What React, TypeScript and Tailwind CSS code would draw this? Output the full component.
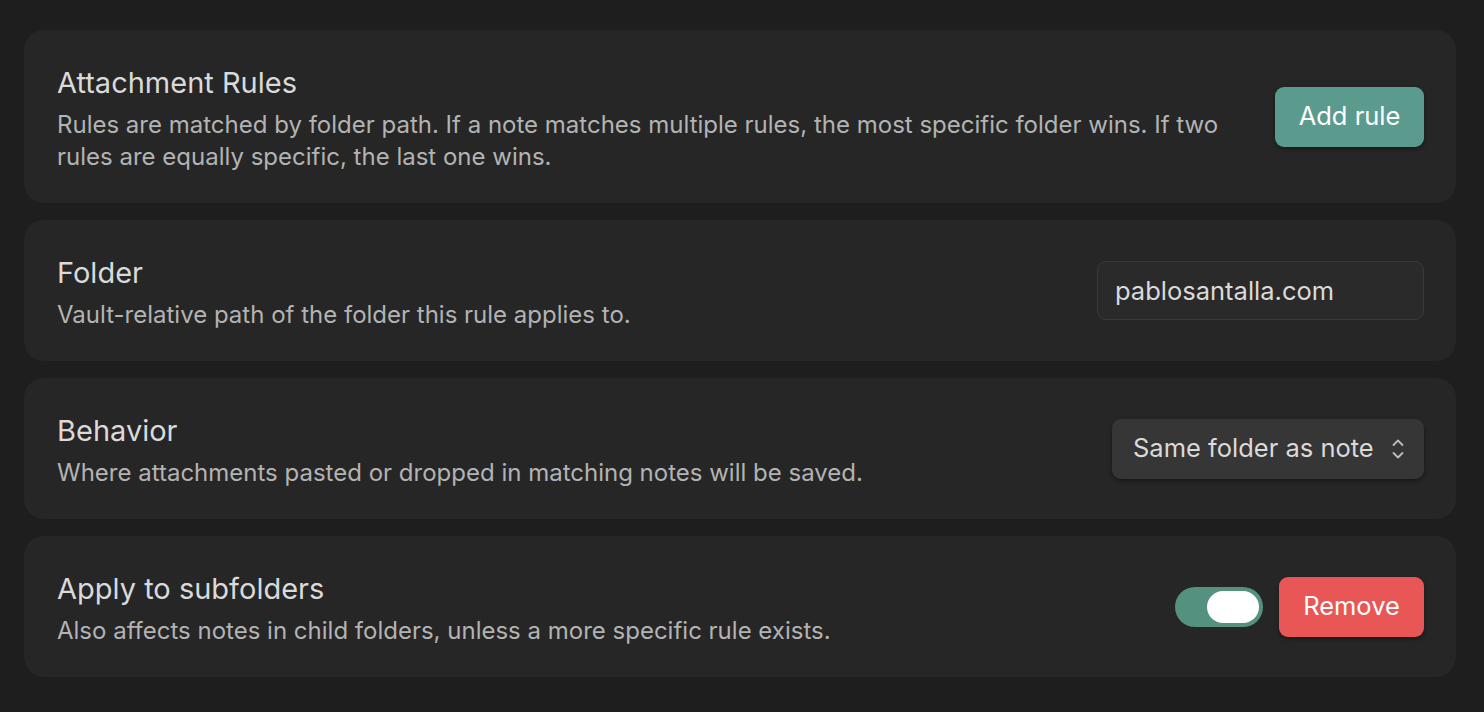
import React, { useState } from "react";

const font = { fontFamily: "Inter, 'Noto Sans', sans-serif" };

const Item = ({
  title,
  desc,
  children,
}: {
  title: string;
  desc: string;
  children: React.ReactNode;
}) => (
  <div className="flex items-center rounded-[20px] bg-[#262626] pl-[33px] pr-[32px] pt-[33px] pb-[30px]">
    <div className="mr-[28px] flex flex-1 flex-col gap-[8px] pt-[2px]">
      <div className="text-[29px] leading-[36px] text-[#dadada]">{title}</div>
      <div className="text-[24px] leading-[32px] text-[#b3b3b3]">{desc}</div>
    </div>
    <div className="mb-[3px] flex shrink-0 items-center gap-[16px]">{children}</div>
  </div>
);

const App = () => {
  const [folder, setFolder] = useState("pablosantalla.com");
  const [on, setOn] = useState(true);

  return (
    <div
      className="flex min-h-[712px] flex-col gap-[17px] bg-[#1e1e1e] pl-[24px] pr-[28px] pt-[30px] pb-[34px] antialiased"
      style={font}
    >
      <Item
        title="Attachment Rules"
        desc="Rules are matched by folder path. If a note matches multiple rules, the most specific folder wins. If two rules are equally specific, the last one wins."
      >
        <button className="h-[60px] w-[149px] rounded-[9px] bg-[#5a9b8e] text-[25.5px] text-white shadow-[0_2px_4px_rgba(0,0,0,0.35)]">
          Add rule
        </button>
      </Item>

      <Item title="Folder" desc="Vault-relative path of the folder this rule applies to.">
        <input
          value={folder}
          onChange={(e) => setFolder(e.currentTarget.value)}
          className="h-[59px] w-[327px] rounded-[9px] border-[1.5px] border-[#3a3a3a] bg-[#2a2a2a] px-[17px] text-[25.5px] text-[#dadada] outline-none"
        />
      </Item>

      <Item
        title="Behavior"
        desc="Where attachments pasted or dropped in matching notes will be saved."
      >
        <button className="flex h-[60px] w-[312px] items-center justify-between rounded-[9px] bg-[#363636] pl-[21px] pr-[20px] text-[25.5px] text-[#dadada] shadow-[0_2px_4px_rgba(0,0,0,0.4)]">
          <span>Same folder as note</span>
          <svg width="12" height="20" viewBox="0 0 12 20" fill="none" stroke="#bdbdbd" strokeWidth="1.8" strokeLinecap="round" strokeLinejoin="round">
            <path d="M1.5 6 L6 1.5 L10.5 6" />
            <path d="M1.5 14 L6 18.5 L10.5 14" />
          </svg>
        </button>
      </Item>

      <Item
        title="Apply to subfolders"
        desc="Also affects notes in child folders, unless a more specific rule exists."
      >
        <button
          onClick={() => setOn(!on)}
          className={
            on
              ? "flex h-[40px] w-[88px] items-center justify-end rounded-full bg-[#55917f] px-[4px]"
              : "flex h-[40px] w-[88px] items-center justify-start rounded-full bg-[#3f3f3f] px-[4px]"
          }
        >
          <span className="h-[32px] w-[52px] rounded-full bg-white" />
        </button>
        <button className="h-[60px] w-[145px] rounded-[9px] bg-[#e85656] text-[25.5px] text-white shadow-[0_2px_4px_rgba(0,0,0,0.35)]">
          Remove
        </button>
      </Item>
    </div>
  );
};

export default App;
